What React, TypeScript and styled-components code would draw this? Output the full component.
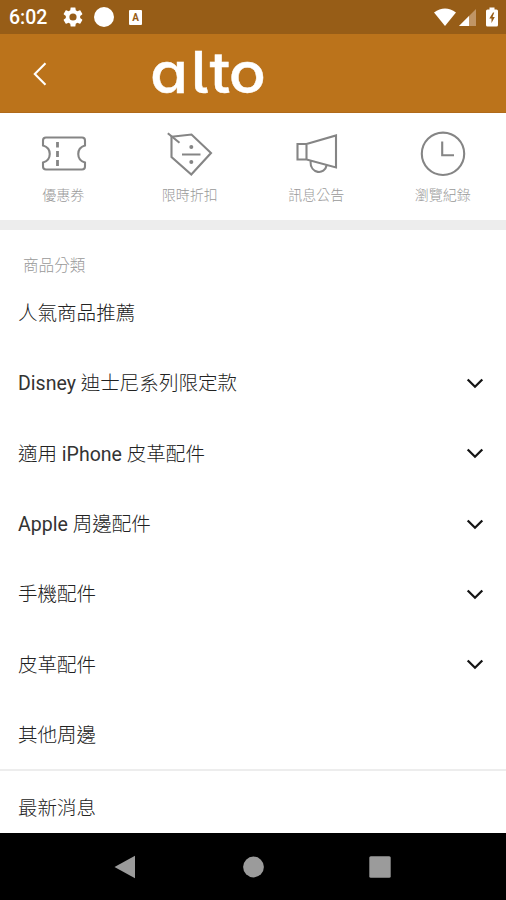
import React from "react";
import styled, { createGlobalStyle } from "styled-components";

const GlobalStyle = createGlobalStyle`
  * { box-sizing: border-box; }
  html, body { margin: 0; padding: 0; background: #fff; }
  body { font-family: Roboto, "Noto Sans CJK TC", sans-serif; overflow: hidden; }
`;

const Screen = styled.div`
  width: 506px;
  height: 900px;
  display: flex;
  flex-direction: column;
  overflow: hidden;
  background: #fff;
`;

const StatusBar = styled.div`
  flex: none;
  height: 34px;
  display: flex;
  align-items: center;
  padding: 0 8px 0 9px;
  background: #975d17;
  color: #fff;
`;

const Time = styled.span`
  width: 54px;
  padding-top: 2px;
  font-size: 19.5px;
  font-weight: 500;
  line-height: 24px;
`;

const StatusIcons = styled.div<{ $gap: number }>`
  display: flex;
  align-items: center;
  gap: ${(p) => p.$gap}px;
`;

const Spacer = styled.div`
  flex: 1;
`;

const Glyph = styled.svg`
  display: block;
  flex: none;
`;

const KeyboardBadge = styled.span`
  width: 13px;
  height: 15px;
  margin-left: 4px;
  border-radius: 1px;
  background: #fff;
  color: #975d17;
  font-size: 10px;
  font-weight: 700;
  line-height: 15px;
  text-align: center;
`;

const Battery = styled(Glyph)`
  margin-left: 7px;
`;

const Header = styled.header`
  flex: none;
  height: 79px;
  display: flex;
  align-items: center;
  padding-left: 32px;
  background: #bb731b;
  border-bottom: 1px solid #b06a1a;
`;

const BackButton = styled.button`
  width: 118px;
  padding: 2px 0 0;
  border: 0;
  background: none;
`;

const Logo = styled.span`
  height: 78px;
  color: #fff;
  font-family: Inter, sans-serif;
  font-size: 57px;
  font-weight: 500;
  line-height: 77px;
  white-space: nowrap;
  font-feature-settings: "cv11" 1, "cv05" 1;
  -webkit-text-stroke: 0.4px #fff;
  transform: scaleX(1.08);
  transform-origin: left center;
`;

const LogoPart = styled.span<{ $tracking: number }>`
  letter-spacing: ${(p) => p.$tracking}px;
`;

const QuickLinks = styled.nav`
  flex: none;
  height: 117px;
  display: grid;
  grid-template-columns: repeat(4, 1fr);
  padding-top: 17px;
  border-bottom: 10px solid #ededed;
`;

const QuickLink = styled.div`
  display: flex;
  flex-direction: column;
  align-items: center;
  color: #999;
  font-size: 14px;
  font-weight: 300;
  line-height: 20px;
`;

const QuickIcon = styled.svg`
  display: block;
  width: 48px;
  height: 48px;
  margin: 0 0 7px 1px;
  fill: none;
  stroke: #858585;
  stroke-width: 2.1;
`;

const SectionTitle = styled.h2`
  flex: none;
  margin: 0;
  height: 47px;
  padding: 26px 0 0 23px;
  color: #999;
  font-size: 15.6px;
  font-weight: 300;
  line-height: 20px;
`;

const Row = styled.div<{ $last?: boolean }>`
  flex: none;
  height: ${(p) => (p.$last ? 61 : 70.33)}px;
  display: flex;
  align-items: center;
  justify-content: space-between;
  padding: ${(p) => (p.$last ? 14 : 3)}px 22px 0 18px;
  color: #222;
  font-size: 19.55px;
  font-weight: 300;
  line-height: 28px;
  white-space: pre;
`;

const RowLabel = styled.span`
  padding-top: 1px;
`;

const Latin = styled.span`
  color: #333;
  font-weight: 400;
`;

const Divider = styled.div`
  flex: none;
  height: 2px;
  background: #ededed;
`;

const NavBar = styled.footer`
  flex: none;
  height: 67px;
  margin-top: auto;
  display: grid;
  grid-template-columns: repeat(3, 127px);
  justify-content: center;
  justify-items: center;
  align-items: center;
  background: #000;
`;

const NavGlyph = styled.svg`
  display: block;
  width: 24px;
  height: 24px;
  fill: #9b9b9b;
`;

const Chevron = () => (
  <Glyph width="18" height="12" viewBox="0 0 18 12" fill="none" stroke="#151515" strokeWidth="2.3">
    <path d="M1.7 1.5 9 8.7 16.3 1.5" />
  </Glyph>
);

const rows = [
  { latin: "", text: "人氣商品推薦", expandable: false },
  { latin: "Disney ", text: "迪士尼系列限定款", expandable: true },
  { before: "適用 ", latin: "iPhone ", text: "皮革配件", expandable: true },
  { latin: "Apple ", text: "周邊配件", expandable: true },
  { latin: "", text: "手機配件", expandable: true },
  { latin: "", text: "皮革配件", expandable: true },
  { latin: "", text: "其他周邊", expandable: false },
];

export default function App() {
  return (
    <Screen>
      <GlobalStyle />
      <StatusBar>
        <Time>6:02</Time>
        <StatusIcons $gap={11}>
          <Glyph width="20" height="20" viewBox="2 2 20 20" fill="#fff">
            <path d="M19.14 12.94c.04-.3.06-.61.06-.94s-.02-.64-.07-.94l2.03-1.58c.18-.14.23-.41.12-.61l-1.92-3.32c-.12-.22-.37-.29-.59-.22l-2.39.96c-.5-.38-1.03-.7-1.62-.94l-.36-2.54c-.04-.24-.24-.41-.48-.41h-3.84c-.24 0-.43.17-.47.41l-.36 2.54c-.59.24-1.13.57-1.62.94l-2.39-.96c-.22-.08-.47 0-.59.22L2.74 8.87c-.12.21-.08.47.12.61l2.03 1.58c-.05.3-.09.63-.09.94s.02.64.07.94l-2.03 1.58c-.18.14-.23.41-.12.61l1.92 3.32c.12.22.37.29.59.22l2.39-.96c.5.38 1.03.7 1.62.94l.36 2.54c.05.24.24.41.48.41h3.84c.24 0 .44-.17.47-.41l.36-2.54c.59-.24 1.13-.56 1.62-.94l2.39.96c.22.08.47 0 .59-.22l1.92-3.32c.12-.22.07-.47-.12-.61zM12 15.6A3.6 3.6 0 1 1 12 8.4a3.6 3.6 0 0 1 0 7.2z" />
          </Glyph>
          <Glyph width="20" height="20" viewBox="0 0 20 20">
            <circle cx="10" cy="10" r="10" fill="#fff" />
          </Glyph>
          <KeyboardBadge>A</KeyboardBadge>
        </StatusIcons>
        <Spacer />
        <StatusIcons $gap={3}>
          <Glyph width="22" height="18" viewBox="0 0 22 18">
            <path d="M0 4.6Q11-3.6 22 4.6L11 18Z" fill="#fff" />
          </Glyph>
          <Glyph width="17" height="17" viewBox="0 0 17 17">
            <path d="M17 0V17H0Z" fill="#c09566" />
            <path d="M10 7V17H0Z" fill="#fff" />
          </Glyph>
          <Battery width="12" height="20" viewBox="0 0 12 19">
            <path d="M3.5 0H8.5V2H10.5Q12 2 12 3.5V17.5Q12 19 10.5 19H1.5Q0 19 0 17.5V3.5Q0 2 1.5 2H3.5Z" fill="#fff" />
            <path d="M7 5 3.3 11H5.5V15.5L8.8 9.5H6.6L8.2 5Z" fill="#975d17" />
          </Battery>
        </StatusIcons>
      </StatusBar>
      <Header>
        <BackButton aria-label="Back">
          <Glyph width="16" height="24" viewBox="0 0 16 24" fill="none" stroke="#fff" strokeWidth="2.1">
            <path d="M13.5 1.2 2.8 12 13.5 22.8" />
          </Glyph>
        </BackButton>
        <Logo>
          <LogoPart $tracking={2.5}>a</LogoPart>
          <LogoPart $tracking={1}>l</LogoPart>
          <LogoPart $tracking={-1}>to</LogoPart>
        </Logo>
      </Header>
      <QuickLinks>
        <QuickLink>
          <QuickIcon viewBox="0 0 48 48">
            <path d="M6 7.5H42Q45 7.5 45 10.5V15.5C36 18 36 30 45 32.5V36.5Q45 39.5 42 39.5H6Q3 39.5 3 36.5V32.5C12 30 12 18 3 15.5V10.5Q3 7.5 6 7.5Z" />
            <path d="M17.5 12v5.5M17.5 21v6M17.5 30v6" strokeWidth="2.8" />
          </QuickIcon>
          優惠券
        </QuickLink>
        <QuickLink>
          <QuickIcon viewBox="0 0 48 48">
            <path d="M5.5 6.8 25.5 4.5 45 23 25.3 44.5 5.5 27Z" />
            <path d="M1.8 3.2 13.5 12.7M16 24.5H34.5" />
            <g fill="#858585" stroke="none">
              <circle cx="25.3" cy="17" r="2" />
              <circle cx="25.3" cy="32" r="2" />
            </g>
          </QuickIcon>
          限時折扣
        </QuickLink>
        <QuickLink>
          <QuickIcon viewBox="0 0 48 48">
            <path d="M13.5 14 43 5.5V37.5L13.5 29.5ZM13.5 14H4.5V29.5H13.5M17.5 31C17 44.5 32 45 33.5 35.5" />
          </QuickIcon>
          訊息公告
        </QuickLink>
        <QuickLink>
          <QuickIcon viewBox="0 0 48 48">
            <circle cx="24" cy="23.8" r="21.2" />
            <path d="M23.2 11.5V25.2H35" />
          </QuickIcon>
          瀏覽紀錄
        </QuickLink>
      </QuickLinks>
      <SectionTitle>商品分類</SectionTitle>
      {rows.map((r) => (
        <Row key={r.latin + r.text}>
          <RowLabel>
            {r.before}
            <Latin>{r.latin}</Latin>
            {r.text}
          </RowLabel>
          {r.expandable && <Chevron />}
        </Row>
      ))}
      <Divider />
      <Row $last>最新消息</Row>
      <NavBar>
        <NavGlyph viewBox="0 0 24 24">
          <path d="M.5 12 21 .7V23.3Z" />
        </NavGlyph>
        <NavGlyph viewBox="0 0 24 24">
          <circle cx="12.5" cy="12" r="10.4" />
        </NavGlyph>
        <NavGlyph viewBox="0 0 24 24">
          <rect x="1.3" y="1.3" width="21.4" height="21.4" rx="1.5" />
        </NavGlyph>
      </NavBar>
    </Screen>
  );
}
